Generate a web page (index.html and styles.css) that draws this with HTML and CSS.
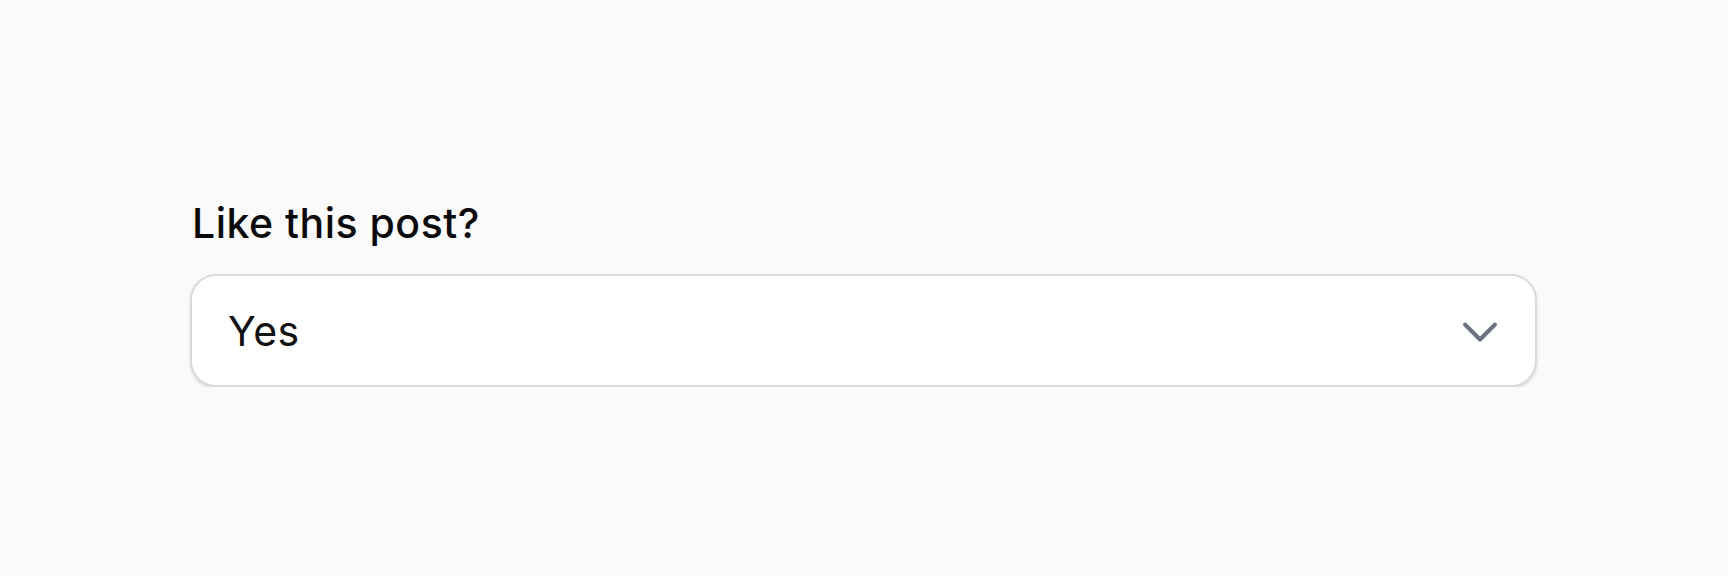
FILE: index.html
```html
<!DOCTYPE html>
<html lang="en">
<head>
<meta charset="utf-8">
<title>Like this post?</title>
<link rel="stylesheet" href="styles.css">
</head>
<body>
<main class="page">
  <div class="field">
    <label class="label" for="like">Like this post?</label>
    <div class="select" id="like" role="button" tabindex="0">
      <span class="value">Yes</span>
      <svg class="chevron" viewBox="0 0 24 24" fill="none" stroke="currentColor" stroke-width="2" stroke-linecap="round" stroke-linejoin="round" aria-hidden="true">
        <path d="M19.5 8.25 12 15.75 4.5 8.25"/>
      </svg>
    </div>
  </div>
</main>
</body>
</html>
```

FILE: styles.css
```css
html, body {
  margin: 0;
  padding: 0;
  background: #fafafa;
}

body {
  font-family: Inter, "Noto Sans", sans-serif;
  color: #111111;
}

.page {
  padding: 198px 0 0 190px;
}

.field {
  width: 1347px;
  display: flex;
  flex-direction: column;
}

.label {
  font-size: 41px;
  font-weight: 500;
  letter-spacing: 0.5px;
  line-height: 50px;
  margin-bottom: 26px;
  padding-left: 2px;
  color: #0a0a0a;
}

.select {
  box-sizing: border-box;
  height: 113px;
  display: flex;
  align-items: center;
  justify-content: space-between;
  padding: 0 31px 0 36px;
  background: #ffffff;
  border: 2px solid #dadada;
  border-radius: 26px;
  box-shadow: 0 2px 3px rgba(0, 0, 0, 0.12);
}

.value {
  font-size: 41px;
  letter-spacing: 0.5px;
  line-height: 50px;
  color: #111111;
}

.chevron {
  width: 48px;
  height: 48px;
  margin-top: 2px;
  color: #6b7280;
  flex: none;
}
```
